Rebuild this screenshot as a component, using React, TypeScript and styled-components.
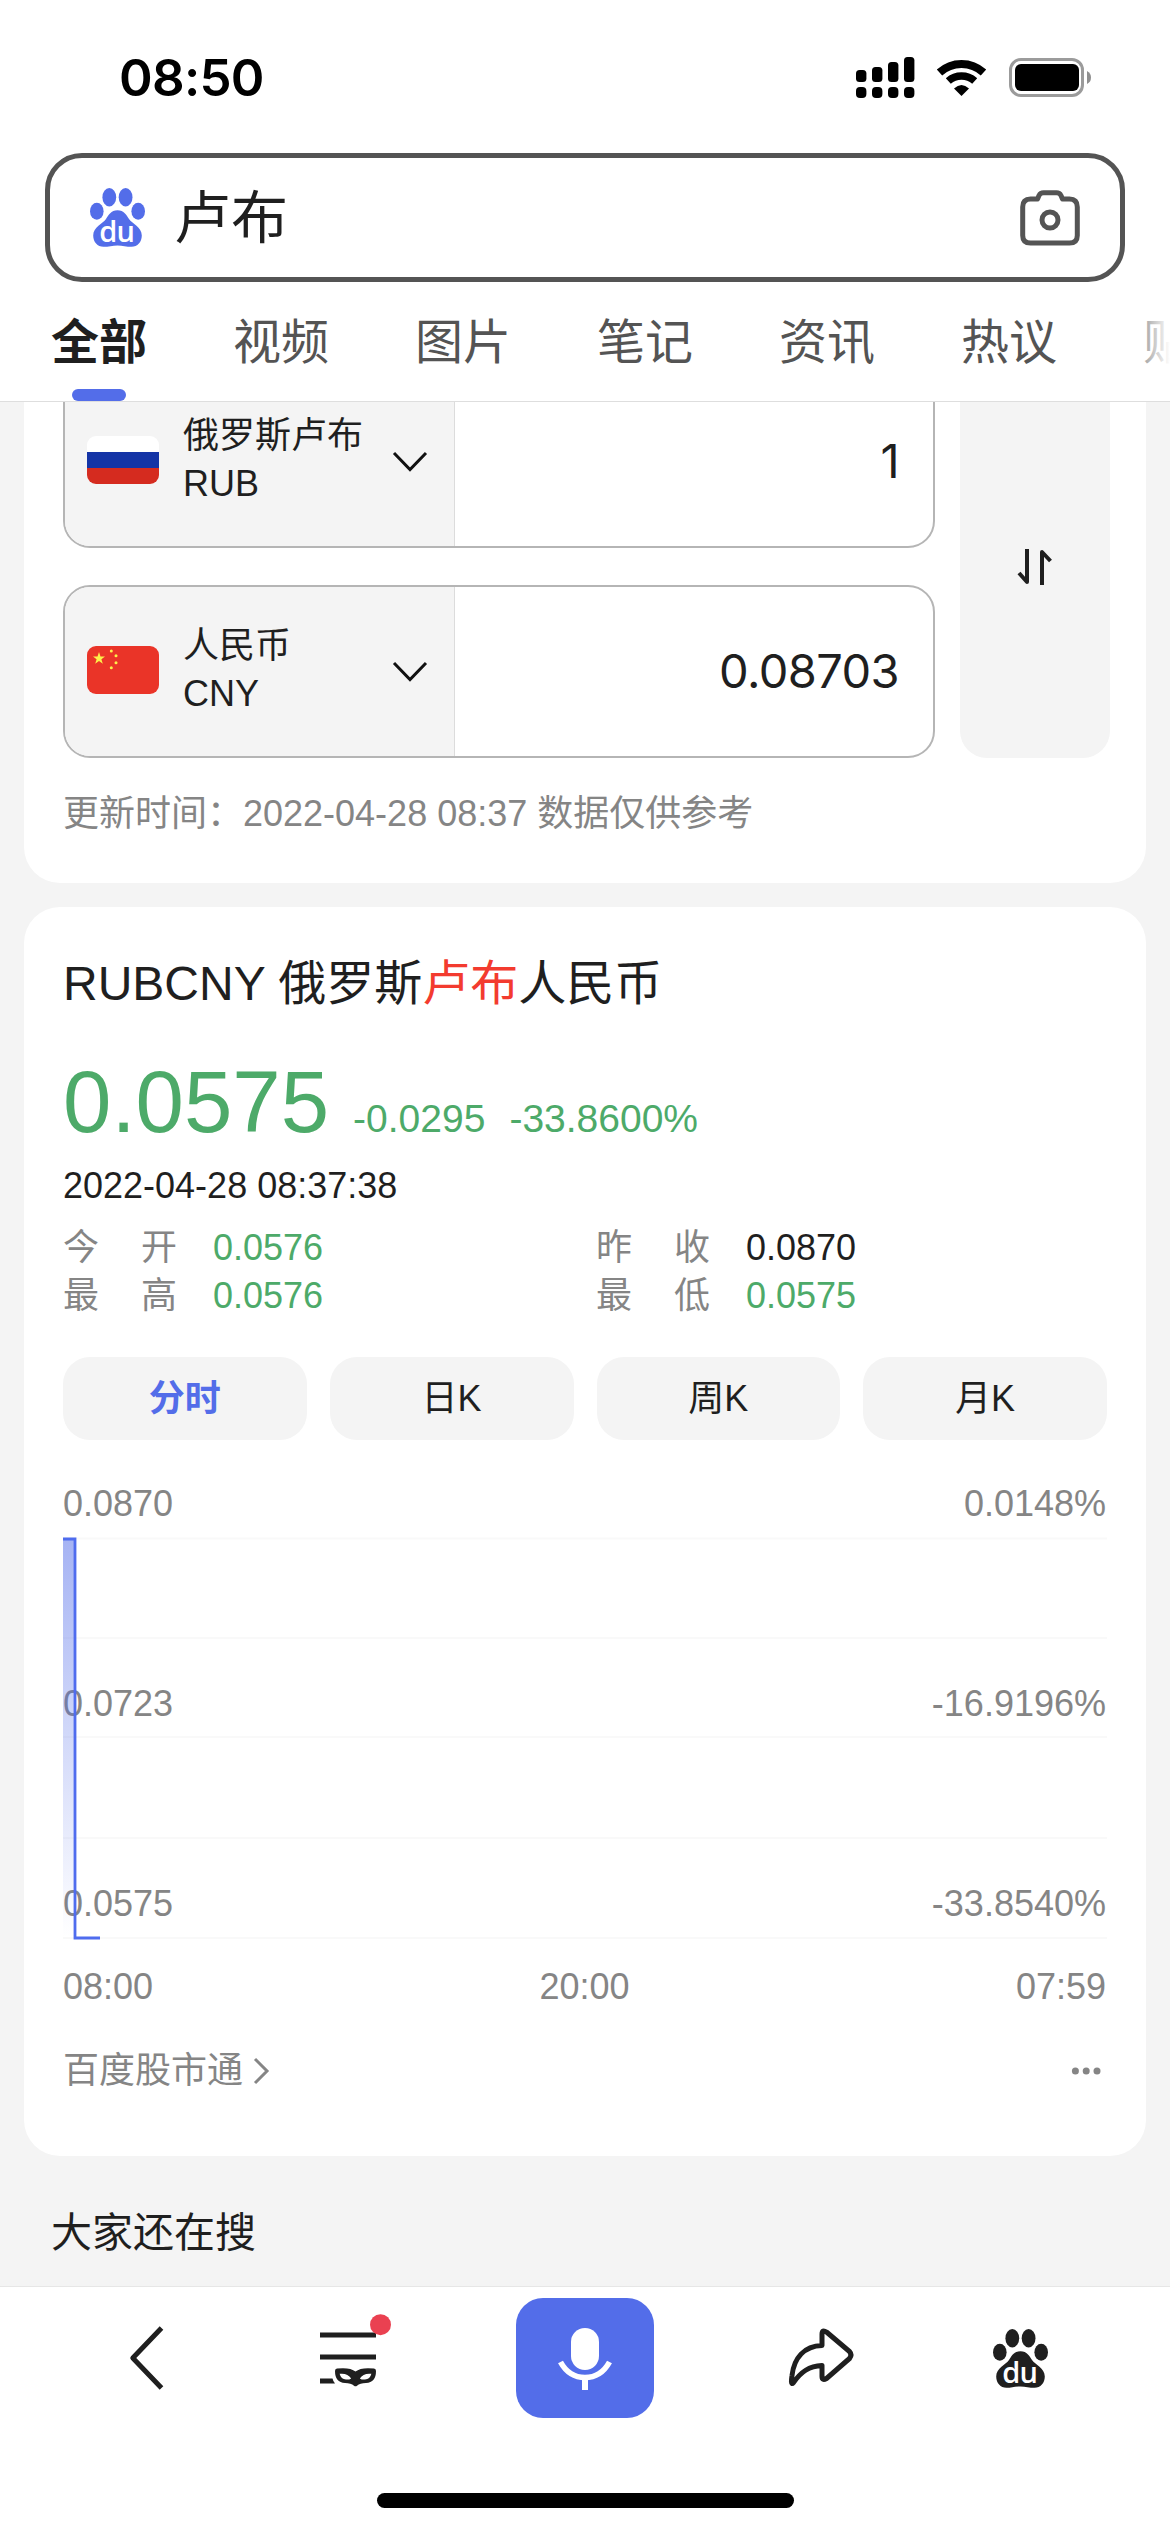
import React from "react";
import styled, { createGlobalStyle } from "styled-components";

const INK = "#1f1f1f";
const GRAY = "#858585";
const BLUE = "#536de9";
const GREEN = "#4daa69";
const PANEL = "#f4f4f4";

const GlobalStyle = createGlobalStyle`
  * { box-sizing: border-box; }
  body {
    margin: 0;
    background: ${PANEL};
    color: ${INK};
    font-family: "Liberation Sans", "Noto Sans CJK SC", sans-serif;
  }
  svg { display: block; flex: none; overflow: visible; }
`;

const Page = styled.div`
  display: flex;
  flex-direction: column;
  width: 1170px;
  height: 2532px;
  overflow: hidden;
  background: ${PANEL};
`;

const Header = styled.header`
  flex: none;
  display: flex;
  flex-direction: column;
  height: 402px;
  background: #fff;
  border-bottom: 1px solid #dedede;
`;

const StatusBar = styled.div`
  display: flex;
  justify-content: space-between;
  align-items: center;
  height: 153px;
  padding: 3px 79px 0 119px;
`;

const Clock = styled.span`
  font: 600 51px/60px Inter, sans-serif;
  letter-spacing: -0.7px;
  color: #000;
`;

const SearchBox = styled.div`
  display: flex;
  align-items: center;
  height: 129px;
  margin: 0 45px;
  padding: 0 40px 0 40px;
  border: 5px solid #545454;
  border-radius: 37px;
`;

const Query = styled.span`
  flex: 1;
  margin-left: 29px;
  font-size: 57px;
  line-height: 80px;
`;

const TabBar = styled.nav`
  position: relative;
  display: flex;
  gap: 86px;
  flex: 1;
  padding-left: 51px;
  overflow: hidden;
  &::after {
    content: "";
    position: absolute;
    right: 0;
    top: 0;
    width: 50px;
    height: 110px;
    background: linear-gradient(90deg, rgba(255,255,255,0), #fff);
  }
`;

const Tab = styled.div<{ $active?: boolean }>`
  flex: none;
  display: flex;
  flex-direction: column;
  align-items: center;
  justify-content: space-between;
  padding-top: 26px;
  font-size: 48px;
  line-height: 70px;
  font-weight: ${(p) => (p.$active ? 700 : 400)};
  color: ${(p) => (p.$active ? INK : "#545454")};
`;

const Underline = styled.i`
  width: 54px;
  height: 12px;
  border-radius: 6px;
  background: ${BLUE};
`;

const Results = styled.main`
  flex: 1;
  display: flex;
  flex-direction: column;
  overflow: hidden;
`;

const Card = styled.section`
  flex: none;
  margin: 0 24px 24px;
  padding: 0 39px;
  border-radius: 36px;
  background: #fff;
`;

const ConverterCard = styled(Card)`
  height: 508px;
  margin-top: -27px;
  border-radius: 0 0 36px 36px;
`;

const Converter = styled.div`
  display: flex;
  gap: 25px;
  margin-right: -3px;
`;

const CurrencyList = styled.div`
  display: flex;
  flex-direction: column;
  gap: 37px;
  flex: 1;
`;

const CurrencyRow = styled.div`
  display: flex;
  height: 173px;
  border: 2px solid #b5b5b5;
  border-radius: 27px;
  overflow: hidden;
`;

const CurrencyPicker = styled.div`
  display: flex;
  align-items: center;
  width: 390px;
  padding: 0 27px 3px 22px;
  background: ${PANEL};
  border-right: 1px solid #dcdcdc;
`;

const CurrencyName = styled.div`
  flex: 1;
  margin-left: 24px;
  font-size: 36px;
  line-height: 48px;
  white-space: nowrap;
`;

const Amount = styled.div`
  flex: 1;
  padding: 1px 34px 0 0;
  text-align: right;
  font: 400 47px/166px Inter, sans-serif;
  letter-spacing: -0.6px;
`;

const SwapButton = styled.button`
  display: flex;
  align-items: center;
  justify-content: center;
  width: 150px;
  padding: 0;
  border: 0;
  border-radius: 27px;
  background: ${PANEL};
`;

const UpdateNote = styled.p`
  margin: 29px 0 0;
  font-size: 36px;
  line-height: 54px;
  color: ${GRAY};
`;

const QuoteCard = styled(Card)`
  height: 1249px;
  padding-top: 42px;
`;

const QuoteTitle = styled.h2`
  margin: 0;
  font-size: 48px;
  line-height: 70px;
  font-weight: 400;
  em { font-style: normal; color: #f33b2f; }
`;

const PriceRow = styled.div`
  display: flex;
  align-items: baseline;
  height: 100px;
  margin-top: 33px;
  color: ${GREEN};
  font-size: 39px;
  line-height: 100px;
  strong { font-size: 87px; font-weight: 400; }
  span { margin-left: 24px; }
`;

const QuoteTime = styled.div`
  margin-top: 10px;
  font-size: 36px;
  line-height: 48px;
`;

const StatGrid = styled.div`
  display: grid;
  grid-template-columns: 1fr 1fr;
  column-gap: 22px;
  margin-top: 14px;
`;

const Stat = styled.div<{ $up?: boolean }>`
  display: flex;
  gap: 36px;
  height: 48px;
  font-size: 36px;
  line-height: 48px;
  color: ${(p) => (p.$up ? INK : GREEN)};
`;

const StatLabel = styled.span`
  display: flex;
  justify-content: space-between;
  width: 114px;
  color: ${GRAY};
`;

const PeriodRow = styled.div`
  display: grid;
  grid-template-columns: repeat(4, 1fr);
  gap: 23px;
  margin-top: 37px;
`;

const Period = styled.button<{ $active?: boolean }>`
  height: 83px;
  padding: 0;
  border: 0;
  border-radius: 27px;
  background: ${PANEL};
  font-family: inherit;
  font-size: 36px;
  line-height: 83px;
  font-weight: ${(p) => (p.$active ? 700 : 400)};
  color: ${(p) => (p.$active ? BLUE : INK)};
`;

const Chart = styled.div`
  position: relative;
  height: 500px;
`;

const ScaleRows = styled.div`
  display: flex;
  flex-direction: column;
  justify-content: space-between;
  height: 500px;
  padding: 41px 0 13px;
`;

const ScaleRow = styled.div`
  display: flex;
  justify-content: space-between;
  padding-right: 1px;
  font-size: 36px;
  line-height: 46px;
  color: ${GRAY};
`;

const Plot = styled.svg`
  position: absolute;
  left: 0;
  top: 0;
`;

const TimeAxis = styled(ScaleRow)`
  margin-top: 24px;
`;

const CardFooter = styled.div`
  display: flex;
  align-items: center;
  justify-content: space-between;
  margin-top: 34px;
  padding-right: 6px;
  font-size: 36px;
  line-height: 54px;
  color: ${GRAY};
`;

const Source = styled.span`
  display: flex;
  align-items: center;
  gap: 10px;
`;

const RelatedTitle = styled.h3`
  margin: 23px 0 0 51px;
  font-size: 41px;
  line-height: 60px;
  font-weight: 400;
`;

const BottomBar = styled.footer`
  flex: none;
  display: flex;
  flex-direction: column;
  align-items: center;
  justify-content: space-between;
  height: 246px;
  padding-bottom: 24px;
  background: #fff;
  border-top: 1px solid #e6e6e6;
`;

const Tools = styled.div`
  display: grid;
  grid-template-columns: 293px 126px 332px 141px 257px;
  justify-items: center;
  align-items: center;
  width: 1170px;
  height: 120px;
  margin-top: 11px;
`;

const MicButton = styled.button`
  display: flex;
  align-items: center;
  justify-content: center;
  width: 138px;
  height: 120px;
  padding: 2px 0 0;
  border: 0;
  border-radius: 27px;
  background: ${BLUE};
`;

const HomeIndicator = styled.div`
  width: 417px;
  height: 15px;
  border-radius: 8px;
  background: #000;
`;

const StatusIcons = () => (
  <svg width="236" height="42" viewBox="855 57 236 42">
    {[70, 67, 62, 57].map((y, i) => (
      <g key={y}>
        <rect x={856 + i * 16} y={y} width="10.4" height={82 - y} rx="3.5" />
        <rect x={856 + i * 16} y="87" width="10.4" height="11" rx="4" />
      </g>
    ))}
    <path d="M939.5 72.5 A32.5 32.5 0 0 1 983.5 72.5" fill="none" stroke="#000" strokeWidth="8" />
    <path d="M948.3 81 A20 20 0 0 1 974.7 81" fill="none" stroke="#000" strokeWidth="7.6" />
    <path d="M954 88.5 Q961.5 81.5 969 88.5 L961.5 96 Z" />
    <rect x="1010.5" y="59.5" width="72" height="36" rx="10.5" fill="none" stroke="#9b9b9b" strokeWidth="3" />
    <rect x="1015" y="64" width="64" height="27" rx="6" />
    <path d="M1087 71 Q1091 73 1091 77.5 Q1091 82 1087 84 Z" fill="#8f8f8f" />
  </svg>
);

const Paw = ({ color }: { color: string }) => (
  <svg width="55" height="59" viewBox="0 0 55 59">
    <g fill={color}>
      <ellipse cx="19.3" cy="9.2" rx="6.9" ry="9.2" />
      <ellipse cx="35.6" cy="9.2" rx="6.9" ry="9.2" />
      <ellipse cx="6.8" cy="23.2" rx="6.8" ry="8.5" />
      <ellipse cx="48.2" cy="23.2" rx="6.8" ry="8.5" />
      <path d="M27.5 22.2 C34 22.2 36.5 27 39 31 C42 35.5 51.8 39 51.8 47.5 C51.8 54 47.5 58.8 41.5 58.8 C36.5 58.8 32.5 57.4 27.5 57.4 C22.5 57.4 18.5 58.8 13.5 58.8 C7.5 58.8 3.2 54 3.2 47.5 C3.2 39 13 35.5 16 31 C18.5 27 21 22.2 27.5 22.2 Z" />
    </g>
    <text x="26.8" y="53.5" textAnchor="middle" fill="#fff" fontFamily="Open Sans, sans-serif" fontWeight="600" fontSize="29" letterSpacing="-0.6">du</text>
  </svg>
);

const Camera = () => (
  <svg width="60" height="56" viewBox="0 0 60 56" fill="none" stroke="#545454" strokeWidth="5" strokeLinejoin="round">
    <path d="M10.5 9 H17.5 L19 5.5 Q20.4 2.7 23.5 2.7 H36.5 Q39.6 2.7 41 5.5 L42.5 9 H49.5 Q57.3 9 57.3 17 V45.5 Q57.3 53 49.5 53 H10.5 Q2.7 53 2.7 45.5 V17 Q2.7 9 10.5 9 Z" />
    <circle cx="30" cy="30" r="8" />
  </svg>
);

const RussiaFlag = () => (
  <svg width="72" height="48" viewBox="0 0 72 48">
    <clipPath id="ru"><rect width="72" height="48" rx="9" /></clipPath>
    <g clipPath="url(#ru)">
      <rect width="72" height="16" fill="#fff" />
      <rect y="16" width="72" height="16" fill="#1434a6" />
      <rect y="32" width="72" height="16" fill="#d52b1f" />
    </g>
  </svg>
);

const ChinaFlag = () => (
  <svg width="72" height="48" viewBox="0 0 72 48">
    <rect width="72" height="48" rx="9" fill="#ea3428" />
    <g fill="#fdf04a">
      <path d="M12 6 L13.5 10.6 H18 L14.4 13.3 L15.8 17.8 L12 15 L8.2 17.8 L9.6 13.3 L6 10.6 H10.5 Z" />
      <circle cx="24.3" cy="5" r="1.5" />
      <circle cx="29" cy="9.8" r="1.5" />
      <circle cx="29" cy="16.8" r="1.5" />
      <circle cx="24.3" cy="21.7" r="1.5" />
    </g>
  </svg>
);

const ChevronDown = () => (
  <svg width="34" height="16" viewBox="0 0 34 16" fill="none" stroke="#111" strokeWidth="3">
    <path d="M1 1 L17 17.5 L33 1" />
  </svg>
);

const SwapIcon = () => (
  <svg width="36" height="36" viewBox="0 0 36 36" fill="none" stroke={INK} strokeWidth="4" strokeLinejoin="round">
    <path d="M10 0 V33 L2 24" />
    <path d="M25 36 V3 L33.5 12" />
  </svg>
);

const PricePlot = () => (
  <Plot width="1044" height="500" viewBox="0 0 1044 500">
    <defs>
      <linearGradient id="area" x1="0" y1="0" x2="0" y2="1">
        <stop offset="0" stopColor={BLUE} stopOpacity="0.52" />
        <stop offset="1" stopColor={BLUE} stopOpacity="0" />
      </linearGradient>
    </defs>
    {[98.5, 198, 297, 398, 498].map((y) => (
      <path key={y} d={`M0 ${y} H1044`} stroke="#000" strokeOpacity="0.025" strokeWidth="2" />
    ))}
    <rect x="0" y="99" width="12" height="399" fill="url(#area)" />
    <path d="M0 99 H12 V498 H37" fill="none" stroke="#4f6cee" strokeWidth="2.8" />
  </Plot>
);

const BackIcon = () => (
  <svg width="34" height="64" viewBox="0 0 34 64" fill="none" stroke={INK} strokeWidth="5" strokeLinejoin="round">
    <path d="M31.5 2 L2.8 32 L31.5 62" />
  </svg>
);

const MenuIcon = () => (
  <svg width="72" height="89" viewBox="0 0 72 89">
    <g fill={INK}>
      <rect x="0" y="18.5" width="56" height="5" />
      <rect x="0" y="40.5" width="56" height="5" />
      <path d="M0 64.5 H12.5 Q13 67 15 69.5 H0 Z" />
      <path fillRule="evenodd" d="M17 54.5 Q30 53 35.5 57.5 Q41 53 54 54.5 Q56 54.5 56 57 Q56 68.5 46 69 Q40 69 37 71.8 Q35.5 72.8 34 71.8 Q31 69 25 69 Q15 68.5 15 57 Q15 54.5 17 54.5 Z M19.6 59.8 Q21 65.4 26 65.6 Q30 65.6 31.2 64.4 Q27.5 58.8 19.6 59.8 Z M51.4 59.8 Q50 65.4 45 65.6 Q41 65.6 39.8 64.4 Q43.5 58.8 51.4 59.8 Z" />
    </g>
    <circle cx="60.5" cy="10.7" r="10.5" fill="#ea4151" />
  </svg>
);

const MicIcon = () => (
  <svg width="56" height="62" viewBox="0 0 56 62">
    <rect x="14" y="0" width="28" height="42" rx="14" fill="#fff" />
    <path d="M3.5 34 C9 44 16.5 49.5 28 49.5 C39.5 49.5 47 44 52.5 34" fill="none" stroke="#fff" strokeWidth="5.6" />
    <rect x="25" y="50" width="6" height="12" fill="#fff" />
  </svg>
);

const ShareIcon = () => (
  <svg width="66" height="60" viewBox="0 0 66 60" fill="none" stroke={INK} strokeWidth="5" strokeLinejoin="round">
    <path d="M33 17.5 V6 Q33 1 37.5 4 L60.5 23.5 Q63.5 27 60.5 30.5 L37.5 50.5 Q33 53 33 48.5 V37.5 C20 38 12 44 4.5 54.5 C1.5 58 2.5 51 3 47.5 C5 30 15 18 33 17.5 Z" />
  </svg>
);

const tabs = ["全部", "视频", "图片", "笔记", "资讯", "热议", "贴吧"];
const currencies = [
  { name: "俄罗斯卢布", code: "RUB", amount: "1", flag: <RussiaFlag /> },
  { name: "人民币", code: "CNY", amount: "0.08703", flag: <ChinaFlag /> },
];
const stats = [
  { label: "今开", value: "0.0576" },
  { label: "昨收", value: "0.0870", up: true },
  { label: "最高", value: "0.0576" },
  { label: "最低", value: "0.0575" },
];
const scale = [
  ["0.0870", "0.0148%"],
  ["0.0723", "-16.9196%"],
  ["0.0575", "-33.8540%"],
];

export default function App() {
  return (
    <Page>
      <GlobalStyle />
      <Header>
        <StatusBar>
          <Clock>08:50</Clock>
          <StatusIcons />
        </StatusBar>
        <SearchBox>
          <Paw color={BLUE} />
          <Query>卢布</Query>
          <Camera />
        </SearchBox>
        <TabBar>
          {tabs.map((label, i) => (
            <Tab key={label} $active={i === 0}>
              {label}
              {i === 0 && <Underline />}
            </Tab>
          ))}
        </TabBar>
      </Header>

      <Results>
        <ConverterCard>
          <Converter>
            <CurrencyList>
              {currencies.map((c) => (
                <CurrencyRow key={c.code}>
                  <CurrencyPicker>
                    {c.flag}
                    <CurrencyName>
                      {c.name}
                      <br />
                      {c.code}
                    </CurrencyName>
                    <ChevronDown />
                  </CurrencyPicker>
                  <Amount>{c.amount}</Amount>
                </CurrencyRow>
              ))}
            </CurrencyList>
            <SwapButton>
              <SwapIcon />
            </SwapButton>
          </Converter>
          <UpdateNote>更新时间：2022-04-28 08:37 数据仅供参考</UpdateNote>
        </ConverterCard>

        <QuoteCard>
          <QuoteTitle>
            RUBCNY 俄罗斯<em>卢布</em>人民币
          </QuoteTitle>
          <PriceRow>
            <strong>0.0575</strong>
            <span>-0.0295</span>
            <span>-33.8600%</span>
          </PriceRow>
          <QuoteTime>2022-04-28 08:37:38</QuoteTime>
          <StatGrid>
            {stats.map((s) => (
              <Stat key={s.label} $up={s.up}>
                <StatLabel>
                  {s.label.split("").map((ch) => (
                    <span key={ch}>{ch}</span>
                  ))}
                </StatLabel>
                {s.value}
              </Stat>
            ))}
          </StatGrid>
          <PeriodRow>
            <Period $active>分时</Period>
            <Period>日K</Period>
            <Period>周K</Period>
            <Period>月K</Period>
          </PeriodRow>
          <Chart>
            <ScaleRows>
              {scale.map(([price, percent]) => (
                <ScaleRow key={price}>
                  <span>{price}</span>
                  <span>{percent}</span>
                </ScaleRow>
              ))}
            </ScaleRows>
            <PricePlot />
          </Chart>
          <TimeAxis>
            <span>08:00</span>
            <span>20:00</span>
            <span>07:59</span>
          </TimeAxis>
          <CardFooter>
            <Source>
              百度股市通
              <svg width="16" height="26" viewBox="0 0 16 26" fill="none" stroke={GRAY} strokeWidth="3">
                <path d="M2 1 L14 13 L2 25" />
              </svg>
            </Source>
            <svg width="30" height="8" viewBox="0 0 30 8" fill={GRAY}>
              <circle cx="4.4" cy="4" r="3.5" />
              <circle cx="15.2" cy="4" r="3.5" />
              <circle cx="26" cy="4" r="3.5" />
            </svg>
          </CardFooter>
        </QuoteCard>
        <RelatedTitle>大家还在搜</RelatedTitle>
      </Results>

      <BottomBar>
        <Tools>
          <BackIcon />
          <MenuIcon />
          <MicButton>
            <MicIcon />
          </MicButton>
          <ShareIcon />
          <Paw color={INK} />
        </Tools>
        <HomeIndicator />
      </BottomBar>
    </Page>
  );
}
